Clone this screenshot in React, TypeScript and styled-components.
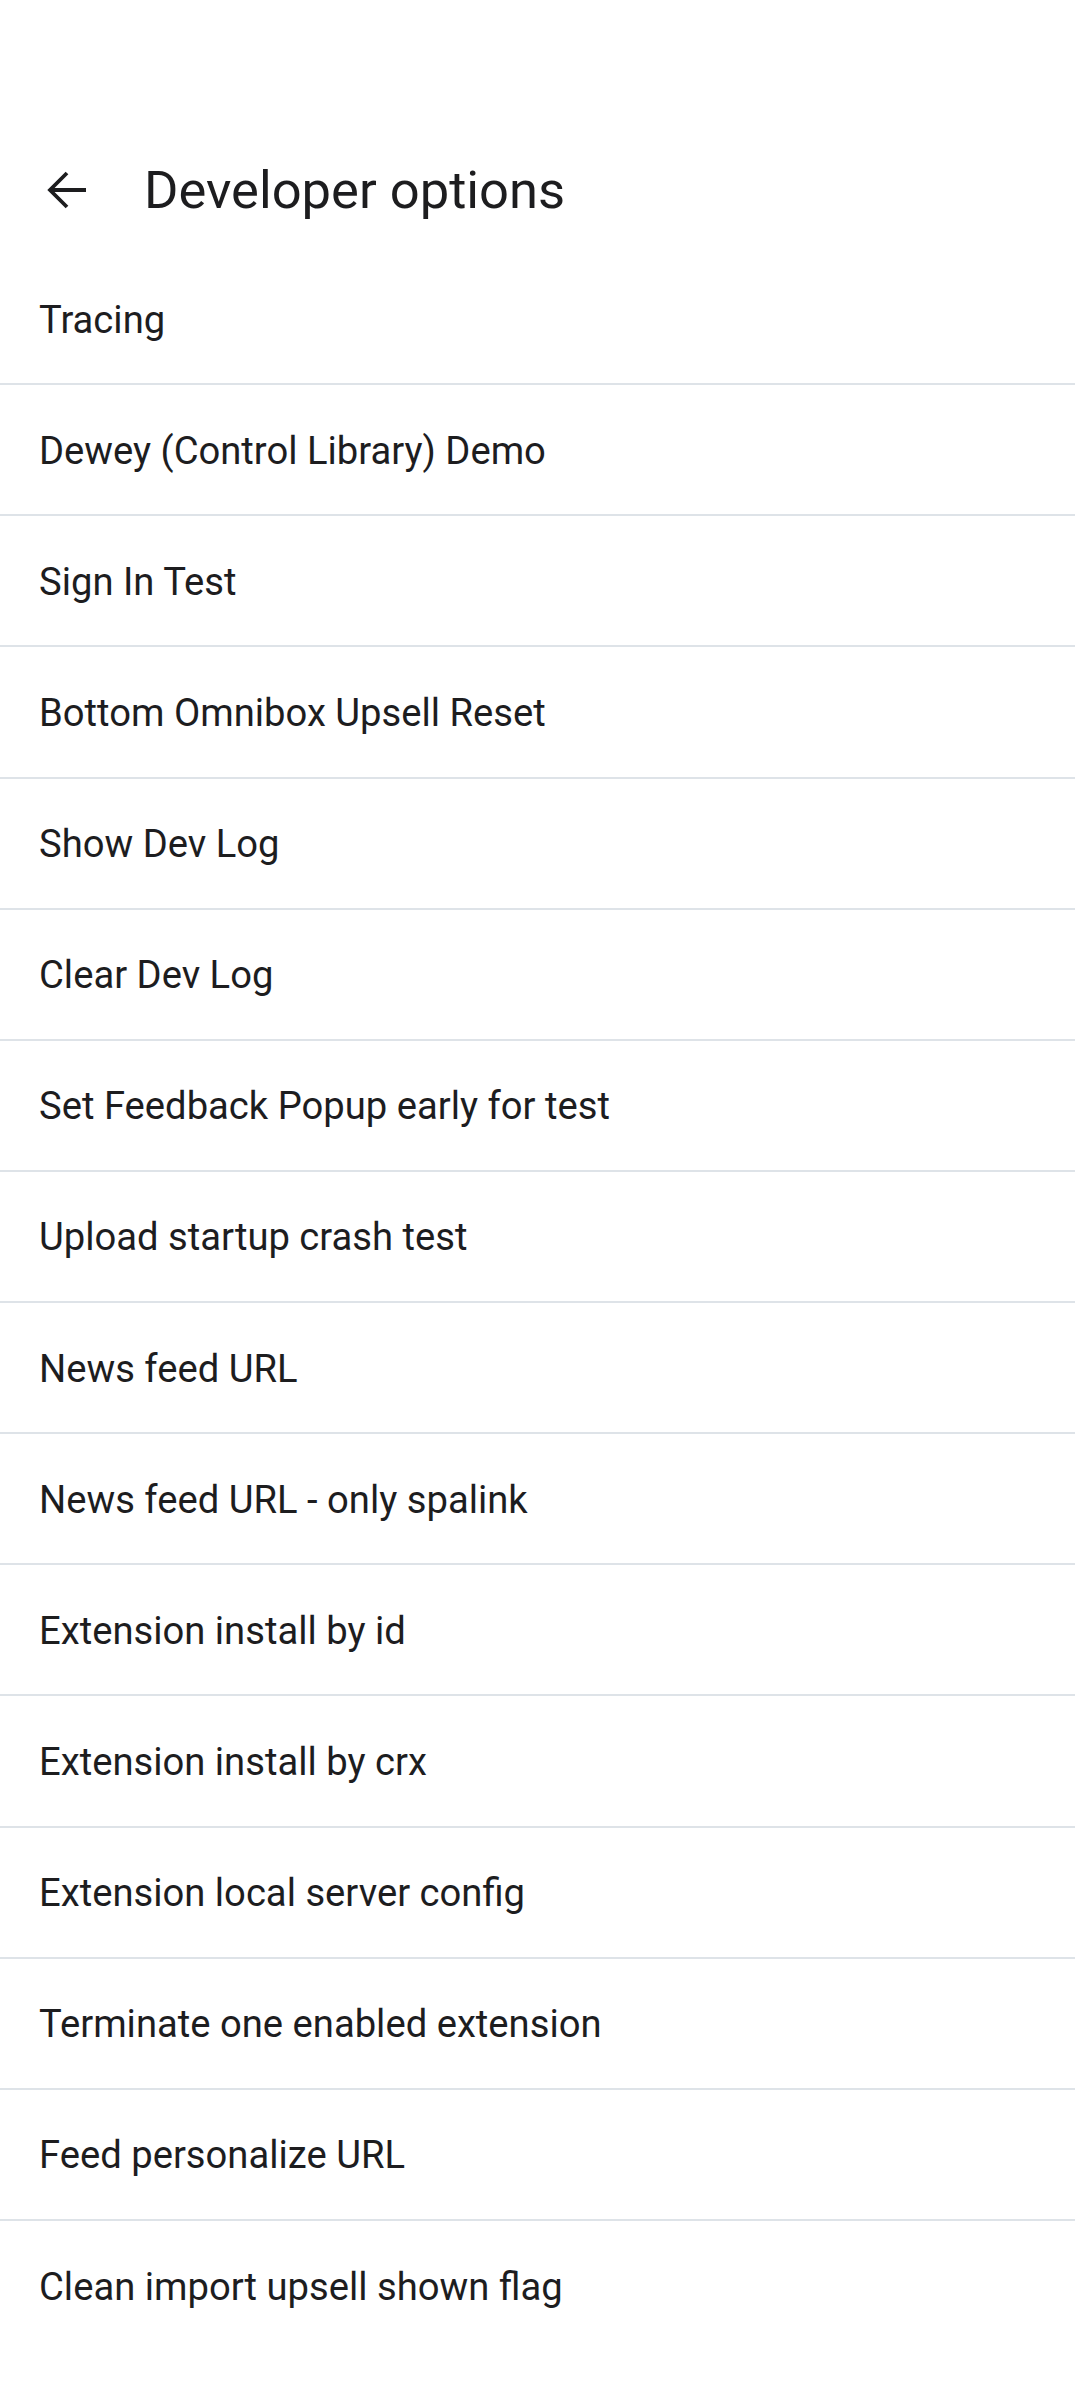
import React from 'react'
import styled, { createGlobalStyle } from 'styled-components'

const GlobalStyle = createGlobalStyle`
  html, body {
    margin: 0;
    padding: 0;
    background: #ffffff;
  }
  body {
    font-family: Roboto, 'Noto Sans', sans-serif;
    color: #1d1d1f;
  }
`

const Page = styled.div`
  width: 1075px;
  min-height: 2393px;
  background: #ffffff;
  display: flex;
  flex-direction: column;
`

const StatusSpace = styled.div`
  height: 126px;
`

const Toolbar = styled.div`
  height: 128px;
  display: flex;
  align-items: center;
  padding-left: 38px;
`

const BackButton = styled.button`
  width: 58px;
  height: 58px;
  border: none;
  background: transparent;
  padding: 0;
  display: flex;
  align-items: center;
  justify-content: center;
  color: #1d1d1f;
  margin-right: 48px;
`

const Title = styled.h1`
  margin: 0;
  font-size: 52.5px;
  font-weight: 400;
  letter-spacing: 0;
  color: #1d1d1f;
`

const List = styled.ul`
  list-style: none;
  margin: 0;
  padding: 0;
`

const Item = styled.li<{ last: boolean }>`
  box-sizing: border-box;
  height: 131.14px;
  display: flex;
  align-items: center;
  padding-left: 39px;
  padding-top: 2px;
  font-size: 38.2px;
  color: #1d1d1f;
  border-bottom: ${({ last }) => (last ? 'none' : '2px solid #dee3e8')};
`

const options = [
  'Tracing',
  'Dewey (Control Library) Demo',
  'Sign In Test',
  'Bottom Omnibox Upsell Reset',
  'Show Dev Log',
  'Clear Dev Log',
  'Set Feedback Popup early for test',
  'Upload startup crash test',
  'News feed URL',
  'News feed URL - only spalink',
  'Extension install by id',
  'Extension install by crx',
  'Extension local server config',
  'Terminate one enabled extension',
  'Feed personalize URL',
  'Clean import upsell shown flag',
]

const BackArrow = () => (
  <svg width="40" height="40" viewBox="0 0 40 40" fill="none">
    <path d="M39 20H4M20 3L3 20l17 17" stroke="currentColor" strokeWidth="3.8" />
  </svg>
)

export default function App() {
  return (
    <Page>
      <GlobalStyle />
      <StatusSpace />
      <Toolbar>
        <BackButton aria-label="Back">
          <BackArrow />
        </BackButton>
        <Title>Developer options</Title>
      </Toolbar>
      <List>
        {options.map((label, i) => (
          <Item key={label} last={i === options.length - 1}>
            {label}
          </Item>
        ))}
      </List>
    </Page>
  )
}
